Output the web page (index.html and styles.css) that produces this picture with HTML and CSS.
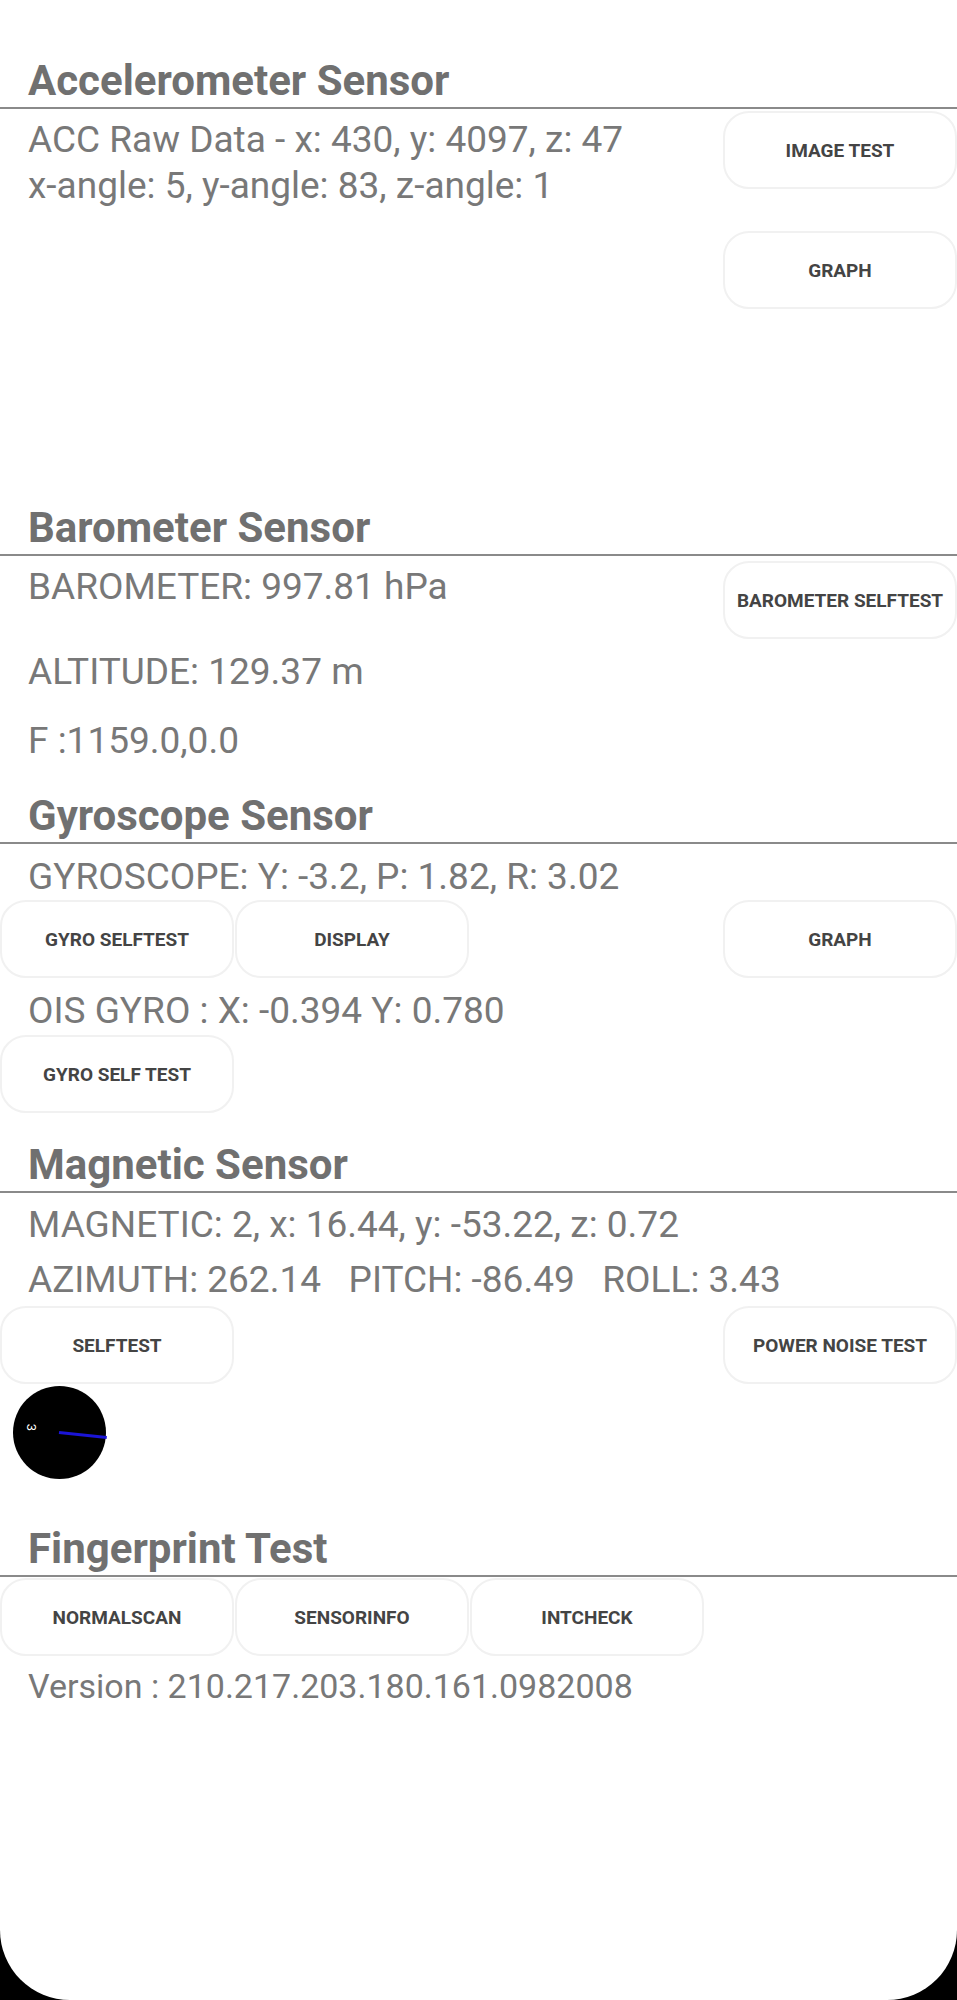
FILE: index.html
```html
<!DOCTYPE html>
<html>

    <head>
        <title>Sensor Test</title>
        <meta name="viewport" content="width=device-width, initial-scale=1.0">
        <link rel="stylesheet" href="styles.css">
    </head>

    <body>
        <div class="screen">

            <div class="section accel">
                <h2 class="section-title">Accelerometer Sensor</h2>
                <div class="row">
                    <div class="values first">
                        <div class="value">ACC Raw Data - x: 430, y: 4097, z: 47</div>
                        <div class="value">x-angle: 5, y-angle: 83, z-angle: 1</div>
                    </div>
                    <div class="btn-stack">
                        <button class="btn">Image Test</button>
                        <button class="btn">Graph</button>
                    </div>
                </div>
            </div>

            <div class="section baro">
                <h2 class="section-title">Barometer Sensor</h2>
                <div class="row">
                    <div class="values first">
                        <div class="value">BAROMETER: 997.81 hPa</div>
                    </div>
                    <button class="btn">Barometer Selftest</button>
                </div>
                <div class="value altitude">ALTITUDE: 129.37 m</div>
                <div class="value force">F :1159.0,0.0</div>
            </div>

            <div class="section gyro">
                <h2 class="section-title">Gyroscope Sensor</h2>
                <div class="value lead">GYROSCOPE: Y: -3.2, P: 1.82, R: 3.02</div>
                <div class="btn-row">
                    <button class="btn">Gyro Selftest</button>
                    <button class="btn">Display</button>
                    <button class="btn push">Graph</button>
                </div>
                <div class="value ois">OIS GYRO : X: -0.394 Y: 0.780</div>
                <div class="btn-row">
                    <button class="btn">Gyro Self Test</button>
                </div>
            </div>

            <div class="section mag">
                <h2 class="section-title">Magnetic Sensor</h2>
                <div class="value lead">MAGNETIC: 2, x: 16.44, y: -53.22, z: 0.72</div>
                <div class="value orient">AZIMUTH: 262.14   PITCH: -86.49   ROLL: 3.43</div>
                <div class="btn-row">
                    <button class="btn">Selftest</button>
                    <button class="btn push">Power Noise Test</button>
                </div>
                <div class="compass">
                    <span class="compass-mark">3</span>
                    <span class="compass-needle"></span>
                </div>
            </div>

            <div class="section finger">
                <h2 class="section-title">Fingerprint Test</h2>
                <div class="btn-row">
                    <button class="btn">Normalscan</button>
                    <button class="btn">Sensorinfo</button>
                    <button class="btn">Intcheck</button>
                </div>
                <div class="value version">Version : 210.217.203.180.161.0982008</div>
            </div>

        </div>
    </body>

</html>
```

FILE: styles.css
```css
body {
    margin: 0;
    background: #000;
    font-family: Roboto, "Noto Sans", sans-serif;
}

.screen {
    width: 957px;
    height: 2000px;
    background: #fff;
    border-radius: 0 0 70px 70px;
    padding-top: 55px;
    box-sizing: border-box;
    overflow: hidden;
}

.section-title {
    margin: 0;
    padding: 0 28px;
    font-size: 42px;
    font-weight: 700;
    line-height: 52px;
    color: #707070;
    border-bottom: 2px solid #8a8a8a;
}

.value {
    padding: 0 28px;
    font-size: 37px;
    line-height: 46px;
    color: #787878;
    white-space: pre;
}

.row {
    display: flex;
    justify-content: space-between;
    align-items: flex-start;
}

.values.first {
    padding-top: 8px;
}

.btn {
    width: 234px;
    height: 78px;
    margin: 0;
    padding: 0;
    background: #fff;
    border: 2px solid #f1f1f1;
    border-radius: 26px;
    font-family: Roboto, "Noto Sans", sans-serif;
    font-size: 19px;
    font-weight: 700;
    text-transform: uppercase;
    color: #444;
}

.btn-stack {
    display: flex;
    flex-direction: column;
    gap: 42px;
    padding-top: 2px;
}

.btn-row {
    display: flex;
    gap: 1px;
}

.btn-row .push {
    margin-left: auto;
}

/* barometer */
.baro {
    margin-top: 193px;
}

.baro .row .btn {
    margin-top: 5px;
}

.baro .altitude {
    margin-top: 10px;
}

.baro .force {
    margin-top: 23px;
}

/* gyroscope */
.gyro {
    margin-top: 26px;
}

.lead {
    padding-top: 10px;
}

.gyro .ois {
    margin: 10px 0 1px;
}

/* magnetic */
.mag {
    margin-top: 26px;
}

.mag .lead {
    padding-top: 9px;
}

.mag .orient {
    margin: 9px 0 3px;
}

.compass {
    position: relative;
    width: 93px;
    height: 93px;
    margin: 2px 0 0 13px;
    background: #000;
    border-radius: 50%;
}

.compass-mark {
    position: absolute;
    left: 15px;
    top: 34px;
    font-size: 13px;
    color: #fff;
    transform: rotate(90deg);
}

.compass-needle {
    position: absolute;
    left: 46px;
    top: 45px;
    width: 48px;
    height: 3px;
    background: #1a14d6;
    transform-origin: 0 50%;
    transform: rotate(6deg);
}

/* fingerprint */
.finger {
    margin-top: 44px;
}

.finger .btn-row {
    margin-top: 1px;
}

.finger .version {
    margin-top: 7px;
    font-size: 34px;
}
```
